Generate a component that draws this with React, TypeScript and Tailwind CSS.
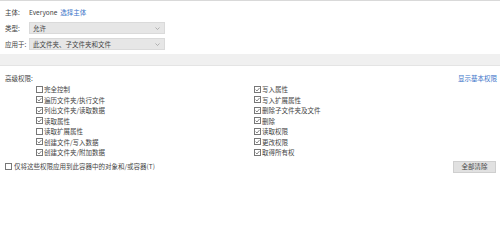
import React from "react";

const font = { fontFamily: '"Noto Sans CJK SC", "Liberation Sans", sans-serif' };

function Box({ checked }: { checked: boolean }) {
  return (
    <span className="w-[7px] h-[7px] border border-[#777] bg-white flex items-center justify-center shrink-0">
      {checked && (
        <svg width="5" height="5" viewBox="0 0 5 5">
          <path d="M0.6 2.6 L2 4 L4.5 1" fill="none" stroke="#555" strokeWidth="0.7" />
        </svg>
      )}
    </span>
  );
}

function Item({ label, checked }: { label: string; checked: boolean }) {
  return (
    <div className="h-[10.5px] flex items-center gap-[1px]">
      <Box checked={checked} />
      <span className="leading-none">{label}</span>
    </div>
  );
}

function Select({ value }: { value: string }) {
  return (
    <div className="w-[136px] h-[12px] bg-[#e6e6e6] border border-[#dadada] flex items-center justify-between pl-[3px] pr-[4px]">
      <span className="leading-none">{value}</span>
      <svg width="5" height="3" viewBox="0 0 5 3">
        <path d="M0.5 0.5 L2.5 2.5 L4.5 0.5" fill="none" stroke="#999" strokeWidth="0.7" />
      </svg>
    </div>
  );
}

const left: [string, boolean][] = [
  ["完全控制", false],
  ["遍历文件夹/执行文件", true],
  ["列出文件夹/读取数据", true],
  ["读取属性", true],
  ["读取扩展属性", false],
  ["创建文件/写入数据", true],
  ["创建文件夹/附加数据", true],
];

const right: [string, boolean][] = [
  ["写入属性", true],
  ["写入扩展属性", true],
  ["删除子文件夹及文件", true],
  ["删除", true],
  ["读取权限", true],
  ["更改权限", true],
  ["取得所有权", true],
];

export default function App() {
  return (
    <div className="w-[500px] h-[243px] bg-white text-[6.5px] text-[#444] overflow-hidden" style={font}>
      <div className="border-t border-[#d9d9d9] px-[5px] pt-[5px] flex flex-col gap-[4px]">
        <div className="h-[12px] flex items-center">
          <span className="w-[24px] leading-none">主体:</span>
          <span className="leading-none">Everyone</span>
          <span className="ml-[3px] text-[#3b74c9] leading-none">选择主体</span>
        </div>
        <div className="flex items-center">
          <span className="w-[24px] leading-none">类型:</span>
          <Select value="允许" />
        </div>
        <div className="flex items-center">
          <span className="w-[24px] leading-none">应用于:</span>
          <Select value="此文件夹、子文件夹和文件" />
        </div>
      </div>

      <div className="mt-[4px] h-[12px] bg-[#f0f0f0] border-b border-[#e4e4e4]" />

      <div className="px-[5px] pt-[8px]">
        <div className="flex items-center justify-between h-[8px]">
          <span className="leading-none">高级权限:</span>
          <span className="leading-none text-[#3b74c9] mr-[-2px]">显示基本权限</span>
        </div>
        <div className="flex mt-[2px]">
          <div className="w-[249px] pl-[31px] flex flex-col">
            {left.map(([l, c]) => (
              <Item key={l} label={l} checked={c} />
            ))}
          </div>
          <div className="flex flex-col">
            {right.map(([l, c]) => (
              <Item key={l} label={l} checked={c} />
            ))}
          </div>
        </div>
        <div className="flex items-center justify-between mt-[3px]">
          <div className="flex items-center gap-[2px]">
            <Box checked={false} />
            <span className="leading-none">仅将这些权限应用到此容器中的对象和/或容器(T)</span>
          </div>
          <button className="w-[43px] h-[12px] bg-[#e1e1e1] border border-[#cfcfcf] leading-none mr-[-1px]">
            全部清除
          </button>
        </div>
      </div>
    </div>
  );
}
